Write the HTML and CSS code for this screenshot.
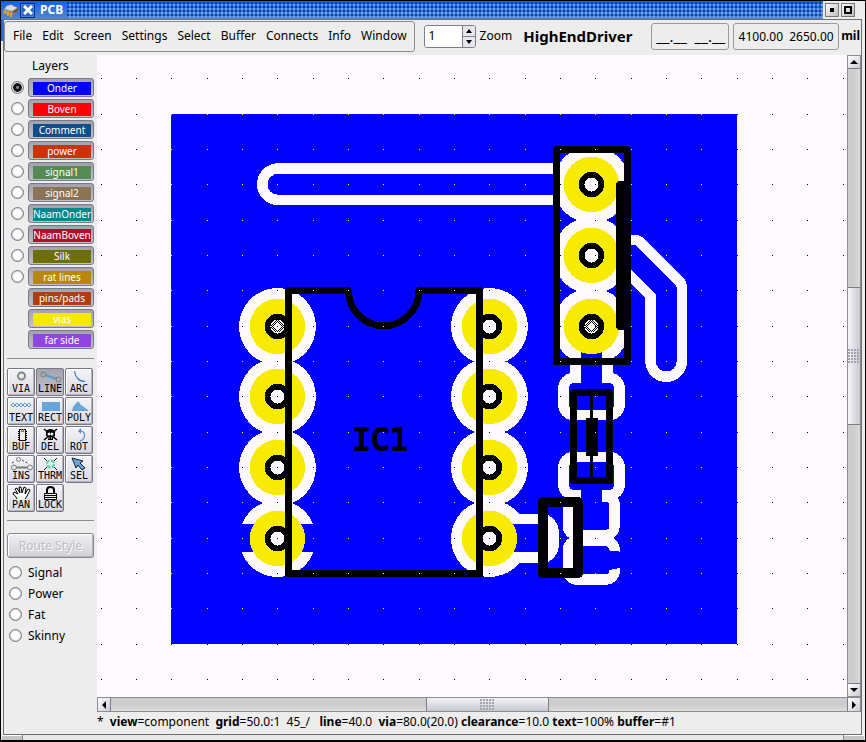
FILE: index.html
```html
<!DOCTYPE html>
<html lang="en">
<head>
<meta charset="utf-8">
<title>PCB</title>
<link rel="stylesheet" href="styles.css">
</head>
<body>
<div class="window">
  <header class="titlebar">
    <svg class="app-icon" width="16" height="16" viewBox="0 0 16 16" aria-hidden="true">
      <path d="M0 9 3 4l5-2 7 4v3l-6 4-8-1z" fill="#8d8d8d"/><path d="M2 7 4 4l4-1 6 3-5 3z" fill="#dcdcdc"/>
      <path d="M2 8v4M5 9v5M8 11v4M11 10v2" stroke="#e8a020" stroke-width="2"/>
      <path d="M15 6v3l-5 3V9z" fill="#6b5a3a"/>
    </svg>
    <button class="close" aria-label="Close"><svg width="10" height="10" viewBox="0 0 10 10"><path d="M1 1l8 8M9 1l-8 8" stroke="#fff" stroke-width="3"/></svg></button>
    <h1>PCB</h1>
    <div class="grip"></div>
    <div class="controls">
      <button aria-label="Minimize"><i class="min"></i></button>
      <button aria-label="Maximize"><i class="max"></i></button>
    </div>
  </header>

  <div class="frame">
    <div class="toolbar">
      <nav class="menu">
        <button>File</button><button>Edit</button><button>Screen</button><button>Settings</button><button>Select</button><button>Buffer</button><button>Connects</button><button>Info</button><button>Window</button>
      </nav>
      <div class="spinner">
        <input id="zoom" type="text" value="1">
        <div class="steps">
          <button aria-label="Zoom up"><i class="tri up"></i></button>
          <button aria-label="Zoom down"><i class="tri down"></i></button>
        </div>
      </div>
      <label class="zoom-label" for="zoom">Zoom</label>
      <strong class="board">HighEndDriver</strong>
      <div class="readout marks">__.__&nbsp; __.__</div>
      <div class="readout coords">4100.00&nbsp; 2650.00</div>
      <strong class="unit">mil</strong>
    </div>

    <div class="main">
      <aside class="side">
        <h2>Layers</h2>
        <div class="layers">
          <div class="layer"><input type="radio" name="layer" aria-label="Onder" checked><button><span class="c-onder">Onder</span></button></div>
          <div class="layer"><input type="radio" name="layer" aria-label="Boven"><button><span class="c-boven">Boven</span></button></div>
          <div class="layer"><input type="radio" name="layer" aria-label="Comment"><button><span class="c-comment">Comment</span></button></div>
          <div class="layer"><input type="radio" name="layer" aria-label="power"><button><span class="c-power">power</span></button></div>
          <div class="layer"><input type="radio" name="layer" aria-label="signal1"><button><span class="c-signal1">signal1</span></button></div>
          <div class="layer"><input type="radio" name="layer" aria-label="signal2"><button><span class="c-signal2">signal2</span></button></div>
          <div class="layer"><input type="radio" name="layer" aria-label="NaamOnder"><button><span class="c-naamonder">NaamOnder</span></button></div>
          <div class="layer"><input type="radio" name="layer" aria-label="NaamBoven"><button><span class="c-naamboven">NaamBoven</span></button></div>
          <div class="layer"><input type="radio" name="layer" aria-label="Silk"><button><span class="c-silk">Silk</span></button></div>
          <div class="layer"><input type="radio" name="layer" aria-label="rat lines"><button><span class="c-rat">rat lines</span></button></div>
          <div class="layer"><button><span class="c-pins">pins/pads</span></button></div>
          <div class="layer"><button><span class="c-vias">vias</span></button></div>
          <div class="layer"><button><span class="c-far">far side</span></button></div>
        </div>

        <div class="tools">
          <button><svg viewBox="0 0 25 15"><circle cx="12.500" cy="7" r="3.500" fill="none" stroke="#838b83" stroke-width="2"/></svg>VIA</button>
          <button class="on"><svg viewBox="0 0 25 15"><path d="M7 6l12 4" stroke="#5a9bd0" stroke-width="2"/><g fill="none" stroke="#777d7d"><circle cx="5.500" cy="5.500" r="2.500"/><circle cx="20.500" cy="10.500" r="2.500"/></g></svg>LINE</button>
          <button><svg viewBox="0 0 25 15"><path d="M7.500 2C8 8 12 12.500 18 12.500" fill="none" stroke="#3f7fb5" stroke-width="1.200"/></svg>ARC</button>
          <button><svg viewBox="0 0 25 15"><path d="M2 7l2-2 2 2-2 2zM6 7l2-2 2 2-2 2zM10 7l2-2 2 2-2 2zM14 7l2-2 2 2-2 2zM18 7l2-2 2 2-2 2z" fill="none" stroke="#5a9bd0"/></svg>TEXT</button>
          <button><svg viewBox="0 0 25 15"><path d="M4 4h18v9H4z" fill="#68a5d8"/></svg>RECT</button>
          <button><svg viewBox="0 0 25 15"><path d="M11 3l3 4 7 5v1H5l1-4z" fill="#68a5d8"/></svg>POLY</button>
          <button><svg viewBox="0 0 25 15" shape-rendering="crispEdges"><path d="M10.500 2.500h6v11h-6z" fill="#efeee0" stroke="#000"/><path d="M9 4.500h2M9 6.500h2M9 8.500h2M9 10.500h2M9 12.500h2M16 4.500h2M16 6.500h2M16 8.500h2M16 10.500h2M16 12.500h2" stroke="#000"/><path d="M12.500 2v2h2V2" fill="none" stroke="#776"/></svg>BUF</button>
          <button><svg viewBox="0 0 25 15"><path d="M6 2l13 11M19 2L6 13" stroke="#000" stroke-width="1.500"/><path d="M8 5q1-3 4.500-3T17 5v4l-2 1v3h-5v-3L8 9z"/><path d="M10 6h2v2h-2zM13 6h2v2h-2zM11 10v2M13.500 10v2" fill="#fff" stroke="#fff" stroke-width=".6"/></svg>DEL</button>
          <button><svg viewBox="0 0 25 15"><path d="M12 4h2q4 1 3.500 5-.5 4-4.500 5" fill="none" stroke="#4f90c8" stroke-width="1.200"/><path d="M11 4l3-3v6z" fill="#4f90c8"/></svg>ROT</button>
          <button><svg viewBox="0 0 25 15"><g fill="none" stroke="#777d77"><circle cx="5" cy="11.500" r="2.500"/><circle cx="21" cy="11.500" r="2.500"/><circle cx="9.500" cy="3.500" r="2"/><path d="M7.500 11.500h11" stroke-width="2"/><path d="M3 7l3-2M13 4l7 4" stroke-dasharray="2 2" stroke="#333"/></g></svg>INS</button>
          <button><svg viewBox="0 0 25 15"><path d="M6 2l4 4M19 2l-4 4M6 14l4-4M19 14l-4-4" stroke="#222"/><circle cx="12.500" cy="8" r="3.500" fill="none" stroke="#52d7a4" stroke-width="2" stroke-dasharray="4 1.500"/></svg>THRM</button>
          <button><svg viewBox="0 0 25 15"><path d="M5 2l11 3-3 2 5 5-3 2-4-5-2 3z" fill="#68a5d8" stroke="#123"/></svg>SEL</button>
          <button><svg viewBox="0 0 25 15"><path d="M8 14q-1-3-4-5l1-2 4 2-3-5 2-1 3 5-1-6h2l1 6 2-6 2 1-1 6 3-5 2 1-3 6q-1 2-2 3" fill="#fff" stroke="#000"/></svg>PAN</button>
          <button><svg viewBox="0 0 25 15"><path d="M9 8V5q0-3 3.500-3T16 5v3" fill="none" stroke="#000" stroke-width="2"/><path d="M6.500 8.500h12v6h-12zM7 10.500h12M7 12.500h12" fill="#eee" stroke="#000"/></svg>LOCK</button>
        </div>

        <button class="route" disabled>Route Style</button>
        <div class="styles">
          <label><input type="radio" name="style">Signal</label>
          <label><input type="radio" name="style">Power</label>
          <label><input type="radio" name="style">Fat</label>
          <label><input type="radio" name="style">Skinny</label>
        </div>
      </aside>

      <div class="view">
        <svg class="canvas" role="img" aria-label="Board layout" shape-rendering="crispEdges">
          <defs>
            <pattern id="grid" x="242" y="78" width="106" height="106" patternUnits="userSpaceOnUse">
              <path fill="#fff" d="M0 0h1v1h-1zM35 0h1v1h-1zM71 0h1v1h-1zM0 36h1v1h-1zM35 36h1v1h-1zM71 36h1v1h-1zM0 71h1v1h-1zM35 71h1v1h-1zM71 71h1v1h-1z"/>
            </pattern>
            <g id="ring"><circle r="27.700" fill="#f7eb00"/><circle r="12.700" fill="#000"/><circle r="7" fill="#fffaff"/></g>
            <path id="mark" d="M-6 1L1-6M-6-1L-1-6M-6 1L-1 6M-6-1L1 6M6 1L-1-6M6-1L1-6M6-1L-1 6M6 1L1 6" stroke="#000" fill="none"/>
          </defs>
          <g transform="translate(-97 -55)">
            <rect x="171" y="114" width="566" height="530" fill="#00f"/>
            <!-- copper clearances -->
            <g fill="#fffaff">
              <circle cx="277.500" cy="326.500" r="38.500"/><circle cx="277.500" cy="396.500" r="38.500"/><circle cx="277.500" cy="467.500" r="38.500"/><circle cx="277.500" cy="538.500" r="38.500"/>
              <circle cx="489.500" cy="326.500" r="38.500"/><circle cx="489.500" cy="396.500" r="38.500"/><circle cx="489.500" cy="467.500" r="38.500"/><circle cx="489.500" cy="538.500" r="38.500"/>
              <circle cx="591.500" cy="184.500" r="38.500"/><circle cx="591.500" cy="255.500" r="38.500"/><circle cx="591.500" cy="326.500" r="38.500"/>
              <path d="M510 514h34v10h-34zM510 552h34v11h-34zM548 515q11 6 11 18v11q0 12-11 18z"/>
            </g>
            <path fill="#00f" d="M237 524h82v28h-82zM490 524h48v28h-48zM581 345h21v30h-21z"/>
            <g fill="none" stroke="#fffaff" stroke-width="10.500">
              <path d="M570 168.500H278a15.750 15.750 0 0 0 0 31.500H570"/>
              <path d="M620 240h15q3 0 6 3l38 38q3 3 3 7v73a15.750 15.750 0 0 1-31.500 0v-65L620 265.500"/>
              <path d="M575.500 360v18h-2a10 10 0 0 0-10 10v17a10 10 0 0 0 10 10h36a10 10 0 0 0 10-10v-17a10 10 0 0 0-10-10h-2v-18"/>
              <path d="M581 495h-7.500a10 10 0 0 1-10-10v-18a10 10 0 0 1 10-10h36a10 10 0 0 1 10 10v18a10 10 0 0 1-10 10H602"/>
              <path d="M602 496.500h4a8.500 8.500 0 0 1 8.500 8.500v21a9 9 0 0 1-9 9H577a9 9 0 0 1-9-9v-26"/>
              <path d="M614.500 551a9 9 0 0 0-9-10H577a9 9 0 0 0-9 9v20.500a9 9 0 0 0 9 9h28.500a9 9 0 0 0 9-10.500"/>
            </g>
            <use href="#ring" x="277.500" y="326.500"/><use href="#ring" x="277.500" y="396.500"/><use href="#ring" x="277.500" y="467.500"/><use href="#ring" x="277.500" y="538.500"/>
            <use href="#ring" x="489.500" y="326.500"/><use href="#ring" x="489.500" y="396.500"/><use href="#ring" x="489.500" y="467.500"/><use href="#ring" x="489.500" y="538.500"/>
            <use href="#ring" x="591.500" y="184.500"/><use href="#ring" x="591.500" y="255.500"/><use href="#ring" x="591.500" y="326.500"/>
            <use href="#mark" x="277.500" y="326.500"/><use href="#mark" x="591.500" y="326.500"/>
            <!-- silkscreen -->
            <g fill="none" stroke="#000" stroke-width="7" stroke-linejoin="round" stroke-linecap="round">
              <path d="M348.500 290.500h-60v283h191v-283H419a35.250 35.250 0 0 1-70.500 0"/>
              <path d="M556.500 149.500h71v212h-71zM573.500 392.500h36v88h-36z"/>
              <path d="M543 502h35v71h-35z" stroke-width="10"/>
            </g>
            <path d="M618 181h13v149h-13l-2-2V183zM586 418h12v38h-12zM590 394h3v86h-3z"/>
            <text class="refdes" x="352" y="450">IC1</text>
            <rect class="dots" x="97" y="55" width="100%" height="100%" fill="url(#grid)"/>
          </g>
        </svg>
        <div class="scroll vert">
          <button aria-label="Scroll up"><i class="tri up"></i></button>
          <div class="track"><div class="before"></div><div class="thumb"><i></i></div><div class="after"></div></div>
          <button aria-label="Scroll down"><i class="tri down"></i></button>
        </div>
        <div class="scroll horiz">
          <button aria-label="Scroll left"><i class="tri left"></i></button>
          <div class="track"><div class="before"></div><div class="thumb"><i></i></div><div class="after"></div></div>
          <button aria-label="Scroll right"><i class="tri right"></i></button>
        </div>
        <footer class="status">*&nbsp; <b>view</b>=component&nbsp; <b>grid</b>=50.0:1&nbsp; 45_/ &nbsp; <b>line</b>=40.0&nbsp; <b>via</b>=80.0(20.0) <b>clearance</b>=10.0 <b>text</b>=100% <b>buffer</b>=#1</footer>
      </div>
    </div>
  </div>
  <div class="resize"><i></i><i></i><i></i></div>
</div>
</body>
</html>
```
FILE: styles.css
```css
* { box-sizing: border-box; }
body {
  margin: 0;
  font: 12px/16px "Noto Sans", sans-serif;
  color: #000;
}
button, input { font: inherit; color: inherit; margin: 0; padding: 0; }
button { border: 0; background: none; }
h1, h2 { margin: 0; font: inherit; }

.window {
  display: flex;
  flex-direction: column;
  min-height: 100vh;
  border: solid #000;
  border-width: 1px 1px 2px;
  background: linear-gradient(#1e6ae8, #1e6ae8) 0 0 / 2px 40px no-repeat #ededed;
}

/* title bar */
.titlebar {
  display: flex;
  align-items: center;
  height: 18px;
  padding-left: 2px;
  background: linear-gradient(#1060f0, #3a78d8 60%, #5585cc);
}
.app-icon { margin-right: 1px; }
.close {
  width: 15px;
  height: 15px;
  display: grid;
  place-items: center;
  background: #2a62c4;
  border: 1px solid #0a2c78;
  box-shadow: inset 0 0 0 1px #4b85e4;
}
.titlebar h1 {
  margin: 0 4px 0 5px;
  color: #fff;
  font-weight: bold;
}
.grip {
  flex: 1;
  height: 16px;
  background:
    radial-gradient(circle at 1px 1px, #123f96 0 1px, transparent 1px) 0 0 / 4px 4px,
    radial-gradient(circle at 1px 1px, #6ba0f0 0 1px, transparent 1px) 2px 2px / 4px 4px;
}
.controls {
  display: flex;
  align-items: center;
  gap: 2px;
  width: 42px;
  height: 18px;
  padding-left: 2px;
  background: #ededed;
}
.controls button {
  width: 14px;
  height: 14px;
  display: grid;
  place-items: center;
  border: 1px solid #777;
  background: linear-gradient(135deg, #fff, #bbb);
}
.min { width: 4px; height: 4px; background: #000; }
.max { width: 8px; height: 8px; border: 2px solid #000; }

/* toolbar */
.frame {
  flex: 1;
  display: flex;
  flex-direction: column;
  margin: 0 3px 0 2px;
  border: 1px solid #6e6e6e;
  background: #ededed;
}
.toolbar {
  display: flex;
  align-items: center;
  height: 35px;
  padding-bottom: 3px;
}
.menu {
  display: flex;
  align-items: center;
  gap: 10px;
  height: 31px;
  padding: 0 7px 0 8px;
  border: 1px solid #8c8c8c;
  border-radius: 3px;
}
.spinner {
  display: flex;
  width: 52px;
  height: 23px;
  margin-left: 9px;
  border: 1px solid #7d7d8c;
  border-radius: 3px;
  background: #fff;
  overflow: hidden;
}
.spinner input { flex: 1; min-width: 0; padding-left: 4px; border: 0; outline: 0; }
.steps {
  width: 13px;
  display: grid;
  border-left: 1px solid #7d7d8c;
}
.steps button { display: grid; place-items: center; background: #e6e6ec; }
.steps button + button { border-top: 1px solid #7d7d8c; }
.tri { width: 0; height: 0; border: 3px solid transparent; }
.scroll .tri { border-width: 4px; }
.tri.up, .scroll .tri.up { border-top: 0; border-bottom: 4px solid #000; }
.tri.down, .scroll .tri.down { border-bottom: 0; border-top: 4px solid #000; }
.scroll .tri.left { border-left: 0; border-right: 4px solid #000; }
.scroll .tri.right { border-right: 0; border-left: 4px solid #000; }
.zoom-label { margin: 0 11px 0 4px; }
.board { flex: 1; font-size: 15px; }
.readout {
  height: 27px;
  padding: 0 4px;
  border: 1px solid #999;
  border-radius: 3px;
  line-height: 25px;
  text-align: center;
  white-space: nowrap;
}
.marks { width: 78px; margin-right: 4px; font-size: 15px; }
.coords { width: 106px; }
.unit { margin: 0 1px 0 2px; }

/* sidebar */
.main { flex: 1; display: flex; }
.side { width: 93px; padding: 2px 3px 0; }
.side h2 { padding-left: 25px; line-height: 17px; }
input[type="radio"] {
  appearance: none;
  width: 13px;
  height: 13px;
  border: 1px solid #777783;
  border-radius: 50%;
  background: #fff;
  box-shadow: 0 0 0 1px #d2d2d8 inset;
}
input[type="radio"]:checked { background: radial-gradient(circle, #888 0 1px, #111 2px 4px, #fff 5px); }
.layers { display: grid; gap: 2px; padding: 4px 0 9px; }
.layer {
  display: flex;
  align-items: center;
  justify-content: flex-end;
  gap: 4px;
  height: 19px;
}
.layer button {
  width: 66px;
  height: 19px;
  padding: 2px 2px 0 4px;
  border: 1px solid #787886;
  border-radius: 3px;
  background: linear-gradient(#a2a2ae, #c0c0c8);
  color: #fff;
}
.layer span {
  display: block;
  height: 13px;
  font-size: 10px;
  line-height: 13px;
  text-align: center;
  white-space: nowrap;
}
.c-onder { background: #0000ff; }
.c-boven { background: #ff0000; }
.c-comment { background: #104e8b; }
.c-power { background: #cd3300; }
.c-signal1 { background: #548b54; }
.c-signal2 { background: #8b7355; }
.c-naamonder { background: #00868b; }
.c-naamboven { background: #b00f2c; }
.c-silk { background: #6b7000; }
.c-rat { background: #b8860b; }
.c-pins { background: #b03c10; }
.c-vias { background: #f5e900; }
.c-far { background: #8f44e4; }

.tools {
  display: grid;
  grid-template-columns: repeat(3, 29px);
  grid-auto-rows: 29px;
  padding: 9px 0 7px;
  border: solid #8c8c8c;
  border-width: 1px 0;
}
.tools button {
  display: flex;
  flex-direction: column;
  align-items: center;
  width: 28px;
  height: 28px;
  border: 1px solid #777785;
  border-radius: 2px;
  background: linear-gradient(#f4f4f8, #d8d8e0);
  box-shadow: inset -1px -1px #b4b4be, inset 1px 1px #fff;
  font: 10px/10px "DejaVu Sans Mono", monospace;
}
.tools svg { flex: none; width: 25px; height: 15px; }
.tools .on { background: linear-gradient(#a4a4b0, #c4c4cc); box-shadow: none; }
.route {
  width: 100%;
  height: 25px;
  margin: 12px 0 4px;
  border: 1px solid #858592;
  border-radius: 3px;
  background: linear-gradient(#f0f0f3, #cfcfd6);
  box-shadow: inset 1px 1px #fff, inset -1px -1px #b8b8c0;
  color: #bcbcc0;
  text-shadow: 1px 1px #fff;
}
.styles { display: grid; }
.styles label { display: flex; align-items: center; gap: 6px; height: 21px; padding-left: 2px; }

/* board view */
.view {
  flex: 1;
  display: grid;
  grid-template: 1fr 15px 22px / 1fr 14px;
  min-width: 0;
}
.canvas {
  width: 100%;
  height: 100%;
  min-height: 600px;
  background: #fffaff;
  isolation: isolate;
}
.dots { mix-blend-mode: difference; }
.refdes {
  font: 31px "DejaVu Sans Mono", monospace;
  stroke: #000;
  stroke-width: 2px;
  stroke-linejoin: round;
}
.scroll, .track { display: flex; }
.track { flex: 1; }
.scroll { border: 1px solid #8c8c94; background: #d0d0d0; }
.horiz { grid-column: 1 / -1; background: linear-gradient(#ccc 50%, #dedada); }
.vert { background: linear-gradient(90deg, #ccc 50%, #dedada); }
.vert, .vert .track { flex-direction: column; }
.scroll button {
  width: 13px;
  height: 13px;
  display: grid;
  place-items: center;
  background: linear-gradient(135deg, #fff, #ccccd8);
}
.vert button { width: 12px; border: solid #7d7d8c; border-width: 0 0 1px; }
.vert button:last-child { border-width: 1px 0 0; }
.horiz button { border: solid #7d7d8c; border-width: 0 1px 0 0; }
.horiz button:last-child { border-width: 0 0 0 1px; }
.thumb {
  display: grid;
  place-items: center;
  border: 1px solid #7d7d8c;
  background: linear-gradient(90deg, #f4f4f8, #c8c8d2);
}
.thumb i {
  width: 14px;
  height: 12px;
  background: radial-gradient(circle at 1px 1px, #a4a4b0 0 1px, transparent 1px) 0 0 / 3px 3px;
}
.horiz .thumb { background: linear-gradient(#f4f4f8, #c8c8d2); border-width: 0 1px; }
.vert .thumb { border-width: 1px 0; }
.vert .thumb i { width: 12px; height: 14px; }
.vert .before { flex: 219; }
.vert .thumb { flex: 137; }
.vert .after { flex: 259; }
.horiz .before { flex: 316; }
.horiz .thumb { flex: 121; }
.horiz .after { flex: 299; }
.status {
  grid-column: 1 / -1;
  line-height: 20px;
  white-space: nowrap;
}
.resize { display: flex; height: 5px; margin: 0 1px; }
.resize i { flex: 0 0 20px; border-top: 1px solid #fff; background: #c4c4c4; }
.resize i:nth-child(2) { flex: 1; border: solid #888; border-width: 0 1px; background: #e8e8e8; }
```
